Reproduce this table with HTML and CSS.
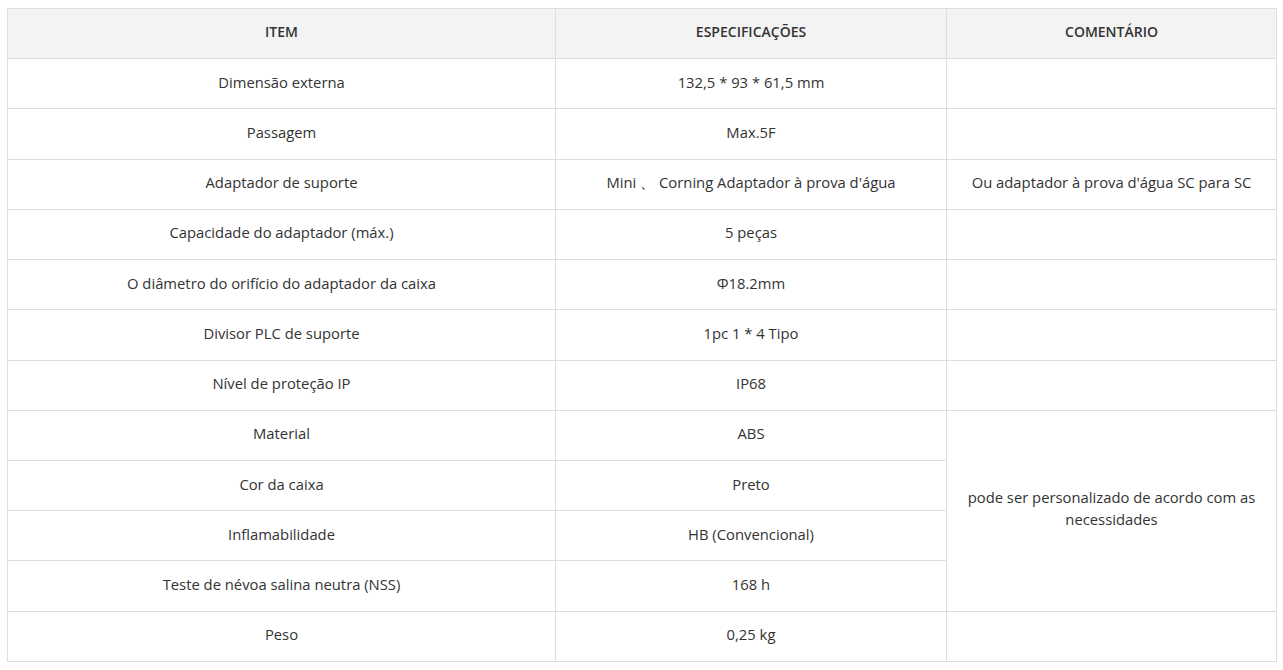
FILE: index.html
```html
<!DOCTYPE html>
<html lang="pt">
<head>
<meta charset="utf-8">
<link rel="stylesheet" href="styles.css">
</head>
<body>
<table class="spec">
  <colgroup>
    <col class="c1"><col class="c2"><col class="c3">
  </colgroup>
  <thead>
    <tr><th>ITEM</th><th>ESPECIFICAÇÕES</th><th>COMENTÁRIO</th></tr>
  </thead>
  <tbody>
    <tr><td>Dimensão externa</td><td>132,5 * 93 * 61,5 mm</td><td></td></tr>
    <tr><td>Passagem</td><td>Max.5F</td><td></td></tr>
    <tr><td>Adaptador de suporte</td><td>Mini 、 Corning Adaptador à prova d'água</td><td>Ou adaptador à prova d'água SC para SC</td></tr>
    <tr><td>Capacidade do adaptador (máx.)</td><td>5 peças</td><td></td></tr>
    <tr><td>O diâmetro do orifício do adaptador da caixa</td><td>Φ18.2mm</td><td></td></tr>
    <tr><td>Divisor PLC de suporte</td><td>1pc 1 * 4 Tipo</td><td></td></tr>
    <tr><td>Nível de proteção IP</td><td>IP68</td><td></td></tr>
    <tr><td>Material</td><td>ABS</td><td rowspan="4" class="wrap">pode ser personalizado de acordo com as necessidades</td></tr>
    <tr><td>Cor da caixa</td><td>Preto</td></tr>
    <tr><td>Inflamabilidade</td><td>HB (Convencional)</td></tr>
    <tr><td>Teste de névoa salina neutra (NSS)</td><td>168 h</td></tr>
    <tr><td>Peso</td><td>0,25 kg</td><td></td></tr>
  </tbody>
</table>
</body>
</html>
```
FILE: styles.css
```css
html, body {
  margin: 0;
  padding: 0;
  background: #fff;
}
body {
  padding: 8px 8px 0 7px;
  font-family: "Open Sans", "DejaVu Sans", sans-serif;
  color: #333;
}
.spec {
  width: 1269px;
  border-collapse: collapse;
  table-layout: fixed;
  font-size: 14.8px;
}
.c1 { width: 548px; }
.c2 { width: 391px; }
.c3 { width: 330px; }
.spec th, .spec td {
  border: 1px solid #dedede;
  text-align: center;
  vertical-align: middle;
  padding: 0 15px 4px;
  height: 50.23px;
  box-sizing: border-box;
  line-height: 22px;
}
.spec th {
  background: #f3f3f3;
  font-weight: 600;
  font-size: 14px;
  color: #333;
}
.spec td.wrap {
  padding: 0 14px 5px;
}
```
